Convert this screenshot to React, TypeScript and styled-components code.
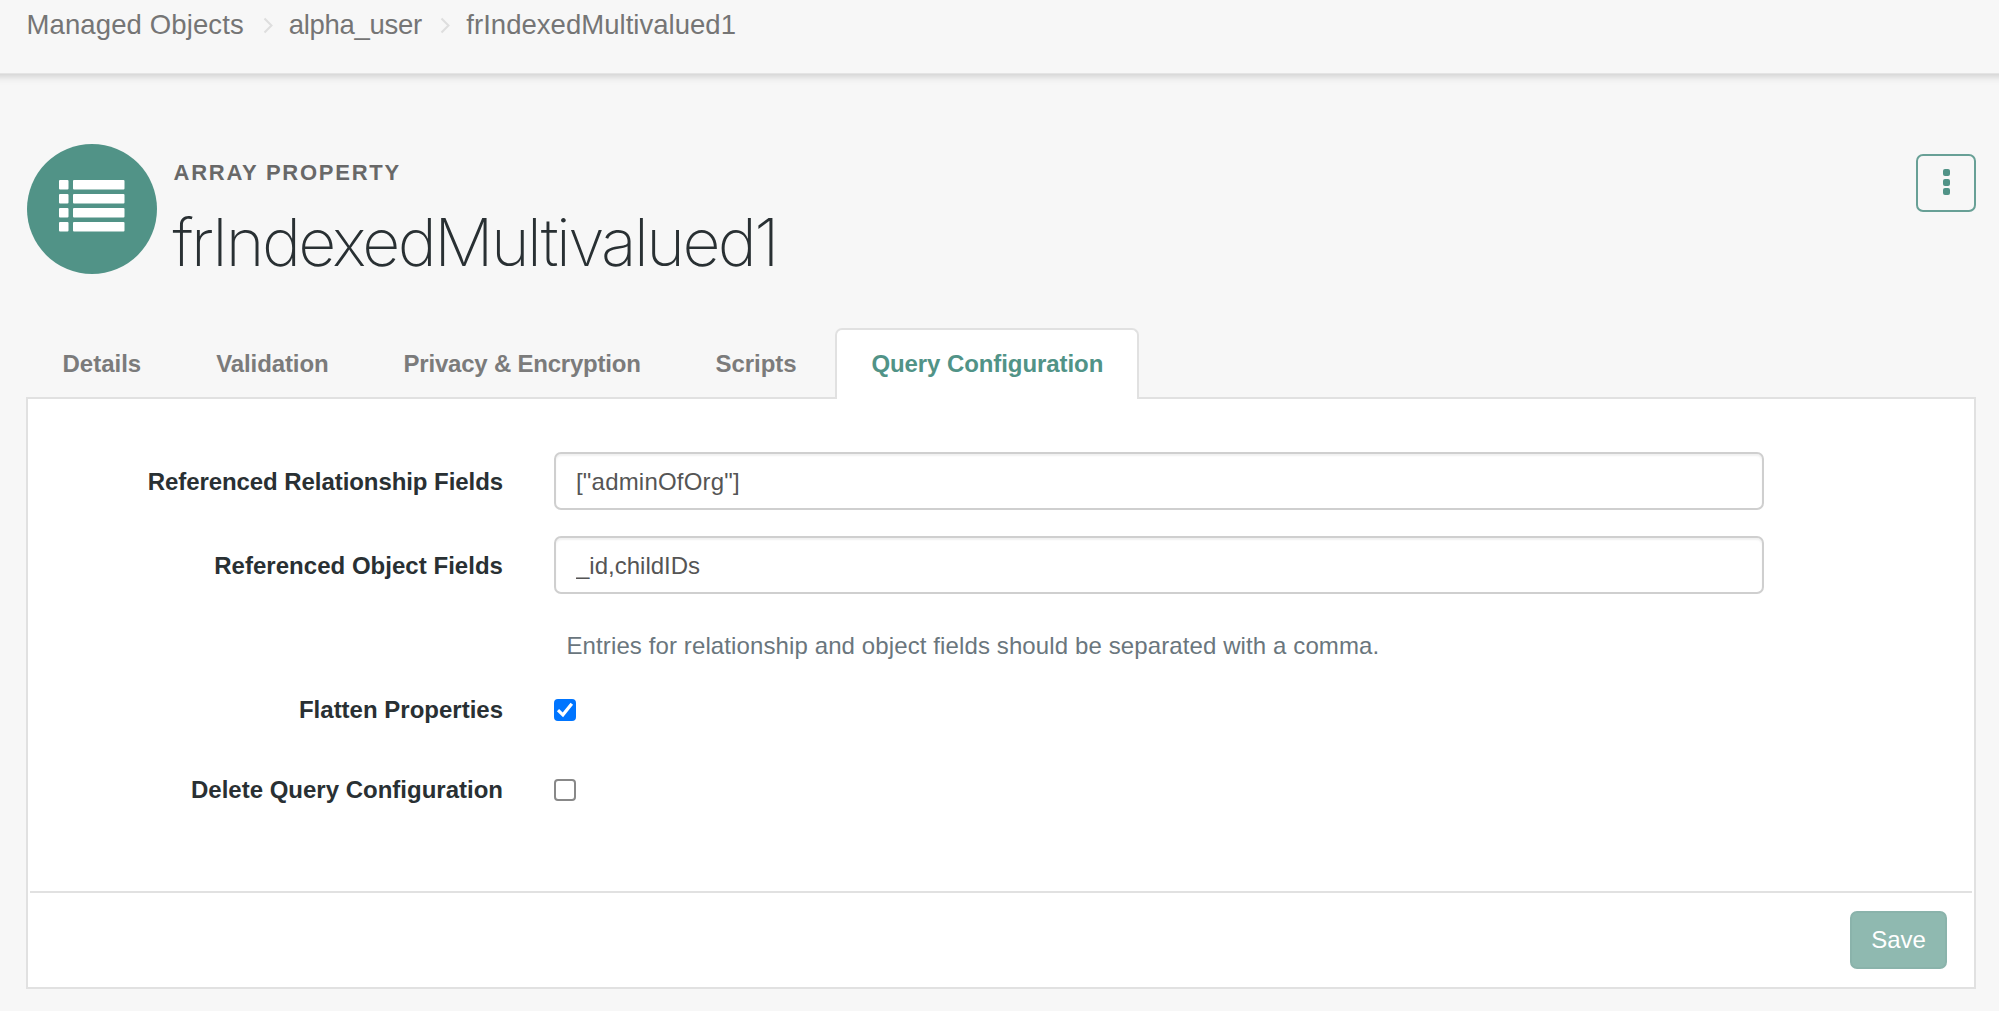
import React, { useState } from "react";
import styled, { createGlobalStyle } from "styled-components";

const teal = "#519387";
const line = "#e1e1e1";

const GlobalStyle = createGlobalStyle`
  *, *::before, *::after { box-sizing: border-box; }
  html, body { margin: 0; padding: 0; }
  body {
    background: #f7f7f7;
    color: #293033;
    font: 24px/34px "Liberation Sans", Arial, sans-serif;
    overflow: hidden;
  }
`;

const Page = styled.div`
  display: flex;
  flex-direction: column;
  height: 1011px;
  width: 1999px;
`;

const Header = styled.header`
  height: 74px;
  flex: none;
  margin: 0 -12px;
  padding: 6px 39px 0 38.5px;
  border-bottom: 1px solid #e4e4e4;
  box-shadow: 0 1px 9px rgba(0, 0, 0, 0.22);
`;

const Crumbs = styled.nav`
  display: flex;
  align-items: center;
  color: #757575;
  font-size: 27.5px;
  line-height: 38px;
  height: 38px;
  white-space: nowrap;
`;

const Crumb = styled.span<{ $width: number; $spacing: number }>`
  width: ${(p) => p.$width}px;
  letter-spacing: ${(p) => p.$spacing}px;
`;

const Chevron = styled.svg`
  width: 11px;
  height: 17px;
  margin: 1px 15px 0 20px;
  flex: none;
`;

const Hero = styled.section`
  display: flex;
  align-items: flex-start;
  padding: 69px 23px 0 26.5px;
  height: 254px;
  flex: none;
`;

const Badge = styled.div`
  width: 130px;
  height: 130px;
  margin-top: 0.5px;
  padding-bottom: 5px;
  border-radius: 50%;
  background: ${teal};
  display: flex;
  align-items: center;
  justify-content: center;
`;

const Heading = styled.div`
  flex: 1;
  padding: 16px 0 0 17px;
`;

const Kind = styled.div`
  color: #686868;
  font-size: 22px;
  line-height: 28px;
  font-weight: 700;
  letter-spacing: 1.75px;
`;

const Title = styled.h1`
  margin: 16.5px 0 0 -1px;
  font-family: Inter, "Liberation Sans", sans-serif;
  font-weight: 200;
  font-size: 66px;
  line-height: 76px;
  letter-spacing: -2.55px;
  white-space: nowrap;
`;

const MenuButton = styled.button`
  width: 60px;
  height: 58px;
  margin-top: 11px;
  padding: 0 0 2px;
  border: 2px solid #68a096;
  border-radius: 7px;
  background: transparent;
  display: flex;
  flex-direction: column;
  gap: 2.3px;
  align-items: center;
  justify-content: center;
`;

const Dot = styled.i`
  width: 7px;
  height: 7px;
  border-radius: 2px;
  background: ${teal};
`;

const Tabs = styled.div`
  display: flex;
  gap: 3px;
  height: 71px;
  margin: 0 23px -2px 26.5px;
  flex: none;
  z-index: 1;
`;

const Tab = styled.button<{ $active?: boolean; $spacing: number }>`
  height: 71px;
  padding: 0 34px 1px;
  border: 2px solid ${(p) => (p.$active ? line : "transparent")};
  border-bottom: 0;
  border-radius: 7px 7px 0 0;
  background: ${(p) => (p.$active ? "#fff" : "transparent")};
  color: ${(p) => (p.$active ? teal : "#7b7b7b")};
  font: 700 24px/34px "Liberation Sans", Arial, sans-serif;
  letter-spacing: ${(p) => p.$spacing}px;
  white-space: nowrap;
`;

const Panel = styled.main`
  display: flex;
  flex-direction: column;
  height: 592px;
  flex: none;
  margin: 0 23px 0 26px;
  border: 2px solid ${line};
  background: #fff;
`;

const Form = styled.form`
  flex: 1;
  padding: 53px 0 0;
`;

const Row = styled.div<{ $height: number; $gap: number }>`
  display: flex;
  align-items: center;
  height: ${(p) => p.$height}px;
  margin-bottom: ${(p) => p.$gap}px;
`;

const Label = styled.label<{ $spacing?: number }>`
  width: 475px;
  margin-right: 51px;
  text-align: right;
  font-weight: 700;
  white-space: nowrap;
  letter-spacing: ${(p) => p.$spacing ?? 0}px;
  padding-top: 1px;
`;

const Input = styled.input<{ $spacing?: number }>`
  width: 1210px;
  height: 58px;
  padding: 1px 20px 0;
  border: 2px solid #cfcfcf;
  border-radius: 7px;
  box-shadow: inset 0 2px 2px rgba(0, 0, 0, 0.06);
  background: #fff;
  color: #555;
  font: 24px/34px "Liberation Sans", Arial, sans-serif;
  letter-spacing: ${(p) => p.$spacing ?? 0}px;
`;

const Help = styled.p`
  padding-left: 538.5px;
  height: 34px;
  margin: 35px 0 29px;
  color: #6a767d;
  letter-spacing: 0.11px;
  white-space: nowrap;
`;

const Check = styled.input`
  appearance: none;
  width: 22px;
  height: 22px;
  margin: 0;
  border: 2px solid #888;
  border-radius: 4px;
  background: #fff;
  &:checked { background: #0075ff; border-color: #0075ff; }
`;

const CheckBox = styled.span`
  display: grid;
  width: 22px;
  height: 22px;
  margin-top: 2px;
  > * { grid-area: 1 / 1; }
  svg { pointer-events: none; z-index: 1; }
`;

const Footer = styled.footer`
  display: flex;
  justify-content: flex-end;
  height: 96px;
  margin: 0 2px;
  padding: 18px 25px 0 0;
  border-top: 2px solid ${line};
`;

const Save = styled.button`
  width: 97px;
  height: 58px;
  padding: 0;
  border: 2px solid #8ab3ab;
  border-radius: 7px;
  background: #8fb9b0;
  color: #fff;
  font: 24px/34px "Liberation Sans", Arial, sans-serif;
`;

const Separator = () => (
  <Chevron viewBox="0 0 11 17" fill="none" stroke="#dedede" strokeWidth="2">
    <path d="M1.5 1.5 8.5 8.5 1.5 15.5" />
  </Chevron>
);

const ListIcon = () => (
  <svg width="66" height="52" viewBox="0 0 66 52" fill="#fff">
    {[0, 14, 28, 42].map((y) => (
      <g key={y}>
        <rect x="0" y={y} width="9.5" height="9.5" rx="1" />
        <rect x="14" y={y} width="51.5" height="9.5" rx="1" />
      </g>
    ))}
  </svg>
);

const CheckField = ({ initial }: { initial: boolean }) => {
  const [on, setOn] = useState(initial);
  return (
    <CheckBox>
      <Check type="checkbox" checked={on} onChange={() => setOn(!on)} />
      {on && (
        <svg width="22" height="22" viewBox="0 0 22 22" fill="none" stroke="#fff" strokeWidth="3.2">
          <path d="M4 11.2 8.9 15.8 17.8 4.8" />
        </svg>
      )}
    </CheckBox>
  );
};

const tabs = [
  { name: "Details", spacing: 0 },
  { name: "Validation", spacing: -0.1 },
  { name: "Privacy & Encryption", spacing: -0.22 },
  { name: "Scripts", spacing: -0.08 },
  { name: "Query Configuration", spacing: -0.08 },
];

export default function App() {
  return (
    <Page>
      <GlobalStyle />
      <Header>
        <Crumbs>
          <Crumb $width={216.3} $spacing={0.12}>Managed Objects</Crumb>
          <Separator />
          <Crumb $width={131.5} $spacing={-0.3}>alpha_user</Crumb>
          <Separator />
          <Crumb $width={280} $spacing={0.03}>frIndexedMultivalued1</Crumb>
        </Crumbs>
      </Header>
      <Hero>
        <Badge>
          <ListIcon />
        </Badge>
        <Heading>
          <Kind>ARRAY PROPERTY</Kind>
          <Title>frIndexedMultivalued1</Title>
        </Heading>
        <MenuButton aria-label="More actions">
          <Dot />
          <Dot />
          <Dot />
        </MenuButton>
      </Hero>
      <Tabs>
        {tabs.map((t) => (
          <Tab key={t.name} $active={t.name === "Query Configuration"} $spacing={t.spacing}>
            {t.name}
          </Tab>
        ))}
      </Tabs>
      <Panel>
        <Form>
          <Row $height={58} $gap={26}>
            <Label $spacing={-0.07}>Referenced Relationship Fields</Label>
            <Input $spacing={0.2} defaultValue={'["adminOfOrg"]'} />
          </Row>
          <Row $height={58} $gap={0}>
            <Label $spacing={0.03}>Referenced Object Fields</Label>
            <Input defaultValue="_id,childIDs" />
          </Row>
          <Help>Entries for relationship and object fields should be separated with a comma.</Help>
          <Row $height={34} $gap={46}>
            <Label>Flatten Properties</Label>
            <CheckField initial={true} />
          </Row>
          <Row $height={34} $gap={0}>
            <Label>Delete Query Configuration</Label>
            <CheckField initial={false} />
          </Row>
        </Form>
        <Footer>
          <Save>Save</Save>
        </Footer>
      </Panel>
    </Page>
  );
}
